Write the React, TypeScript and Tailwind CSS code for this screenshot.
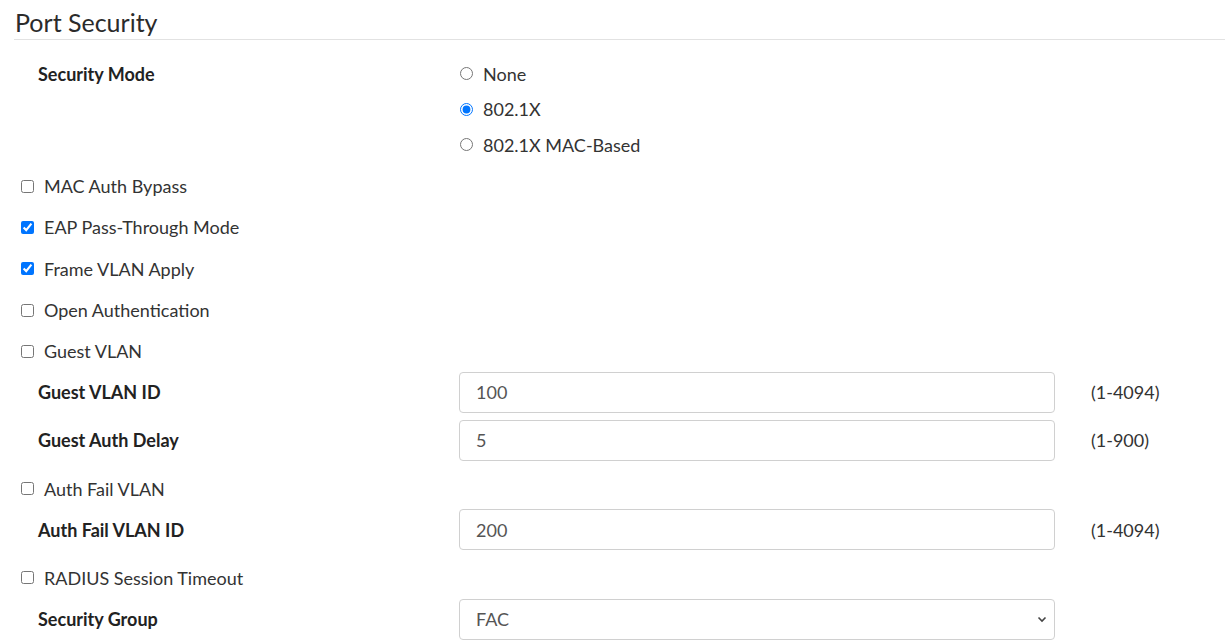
import React from 'react';

const checkRows: { label: string; checked?: boolean }[] = [
  { label: 'MAC Auth Bypass' },
  { label: 'EAP Pass-Through Mode', checked: true },
  { label: 'Frame VLAN Apply', checked: true },
  { label: 'Open Authentication' },
  { label: 'Guest VLAN' },
];

function CheckRow({ label, checked }: { label: string; checked?: boolean }) {
  return (
    <label className="flex h-[41.3px] items-center pl-[21px]">
      <input type="checkbox" defaultChecked={checked} className="m-0 h-[13px] w-[13px]" />
      <span className="ml-[10px]">{label}</span>
    </label>
  );
}

function FieldRow({
  label,
  children,
  hint,
}: {
  label: string;
  children: React.ReactNode;
  hint?: string;
}) {
  return (
    <div className="mb-[7px] flex h-[41px] items-center">
      <div className="w-[459px] pl-[38px] font-bold text-[#222]">{label}</div>
      <div className="w-[596px]">{children}</div>
      {hint ? <div className="ml-[36px] text-[#333]">{hint}</div> : null}
    </div>
  );
}

function TextInput({ value }: { value: string }) {
  return (
    <input
      type="text"
      defaultValue={value}
      className="h-[41px] w-full rounded-[4px] border border-[#d0d0d0] bg-white px-[16px] text-[#555] outline-none"
    />
  );
}

export default function App() {
  return (
    <div
      className="min-h-[640px] w-[1225px] bg-white text-[18px] leading-[24px] text-[#333]"
      style={{ fontFamily: 'Lato, "Open Sans", sans-serif' }}
    >
      <div className="ml-[14px] flex h-[40px] items-center border-b border-[#e2e2e2] pt-[5px] pl-[1px]">
        <h1 className="text-[25px] leading-none text-[#2b2b2b]">Port Security</h1>
      </div>

      <div className="flex pt-[16px] pb-[3px]">
        <div className="flex h-[35.5px] w-[459px] items-center pl-[38px] font-bold text-[#222]">
          Security Mode
        </div>
        <div className="flex flex-col">
          {['None', '802.1X', '802.1X MAC-Based'].map((opt) => (
            <label key={opt} className="flex h-[35.5px] items-center pl-[1px]">
              <input
                type="radio"
                name="mode"
                defaultChecked={opt === '802.1X'}
                className="m-0 h-[13px] w-[13px]"
              />
              <span className="ml-[10px]">{opt}</span>
            </label>
          ))}
        </div>
      </div>

      {checkRows.map((r) => (
        <CheckRow key={r.label} label={r.label} checked={r.checked} />
      ))}

      <FieldRow label="Guest VLAN ID" hint="(1-4094)">
        <TextInput value="100" />
      </FieldRow>
      <FieldRow label="Guest Auth Delay" hint="(1-900)">
        <TextInput value="5" />
      </FieldRow>

      <CheckRow label="Auth Fail VLAN" />

      <FieldRow label="Auth Fail VLAN ID" hint="(1-4094)">
        <TextInput value="200" />
      </FieldRow>

      <CheckRow label="RADIUS Session Timeout" />

      <FieldRow label="Security Group">
        <div className="relative">
          <select
            defaultValue="FAC"
            className="h-[41px] w-full appearance-none rounded-[4px] border border-[#d0d0d0] bg-white px-[16px] text-[#555] outline-none"
          >
            <option>FAC</option>
          </select>
          <svg
            className="pointer-events-none absolute right-[8px] top-1/2 h-[10px] w-[10px] -translate-y-1/2"
            viewBox="0 0 10 10"
            fill="none"
            stroke="#444"
            strokeWidth="1.6"
          >
            <path d="M1.5 3.5 5 7l3.5-3.5" />
          </svg>
        </div>
      </FieldRow>
    </div>
  );
}
